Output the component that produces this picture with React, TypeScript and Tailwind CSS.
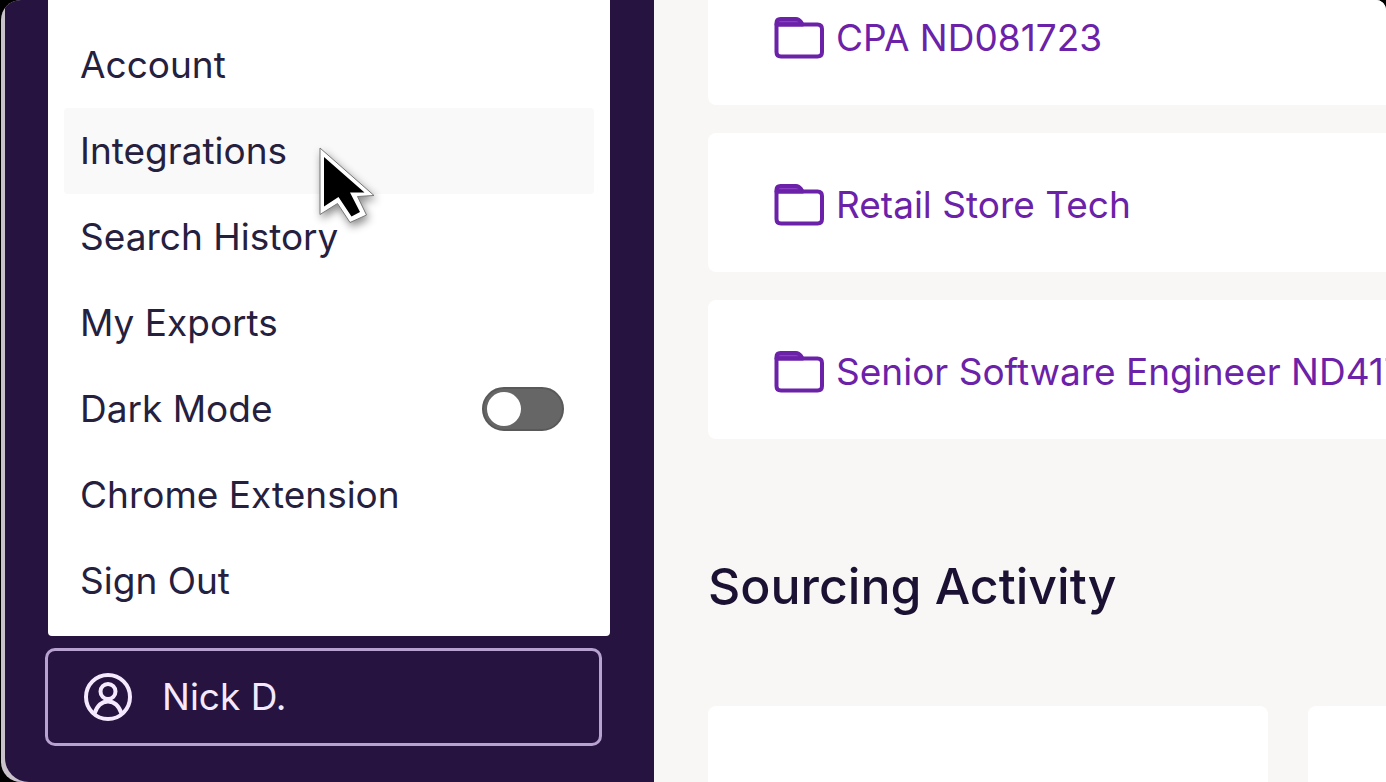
import { useState } from "react";

const menuItems = ["Account", "Integrations", "Search History", "My Exports", "Dark Mode", "Chrome Extension", "Sign Out"]

const projects = ["CPA ND081723", "Retail Store Tech", "Senior Software Engineer ND417"]

const FolderIcon = () => (
  <svg className="w-[50px] h-[42px] shrink-0" viewBox="0 0 50 42" fill="none" stroke="#6b21a8" strokeWidth="4" strokeLinejoin="round" aria-hidden="true">
    <path d="M2.5 7.500V6C2.500 3.500 4 2 6.500 2H22C24.500 2 25.500 3 27 5L28.500 7.500Z" fill="#8b3fc4" />
    <path d="M2.500 7.500H43.500C46.500 7.500 48 9 48 12V35C48 38 46.500 39.500 43.500 39.500H7C4 39.500 2.500 38 2.500 35Z" />
  </svg>
)

const UserIcon = () => (
  <svg className="w-12 h-12 shrink-0" viewBox="0 0 48 48" fill="none" stroke="currentColor" strokeWidth="4" aria-hidden="true">
    <circle cx="24" cy="24" r="22" />
    <circle cx="24" cy="18.500" r="7.500" />
    <path d="M10.500 40.500C13 33 17.500 28.500 24 28.500S35 33 37.500 40.500" />
  </svg>
)

const Cursor = () => (
  <svg className="absolute left-[254px] top-[39px] w-[62px] h-[84px] z-10 pointer-events-none drop-shadow-[2px_4px_4px_rgba(0,0,0,0.45)]" viewBox="0 0 62 84" aria-hidden="true">
    <path d="M2 1L56 48.500L39.500 49.500L48.500 68L32 75.500L19.500 56.500L2 67.500Z" fill="#fff" stroke="#777" strokeWidth="1" />
    <path d="M6 10L46.500 45.500L32 45.500L42 65L33.500 69.500L20.500 50L6 59.500Z" fill="#000" />
  </svg>
)

const MenuItem = ({ label }: { label: string }) => {
  const [checked, setChecked] = useState(false)

  if (label === "Dark Mode") {
    return (
      <li>
        <label className="h-[86px] px-4 flex items-center justify-between cursor-pointer">
          <span>{label}</span>
          <span className="relative mr-[14px] w-[82px] h-11">
            <input
              type="checkbox"
              role="switch"
              className="w-full h-full appearance-none rounded-full bg-[#666666] border-2 border-[#595959]"
              checked={checked}
              onChange={(e) => setChecked(e.target.checked)}
            />
            <span className={`${checked ? "right-[5px]" : "left-[5px]"} absolute top-[5px] w-[34px] h-[34px] rounded-full bg-white pointer-events-none`}></span>
          </span>
        </label>
      </li>
    )
  }

  return (
    <li className="relative">
      <a href="#" className={`${label === "Integrations" ? "bg-[#f9f9fa]" : ""} h-[86px] px-4 flex items-center rounded-[4px]`}>{label}</a>
      {label === "Integrations" && <Cursor />}
    </li>
  )
}

const Sidebar = () => (
  <aside className="w-[649px] shrink-0 pl-10 pr-[44px] pb-9 flex flex-col gap-3 rounded-bl-[24px] rounded-tl-[6px] bg-[#27133f]">
    <nav className="ml-[3px] px-4 pb-3 flex-1 min-h-0 flex flex-col justify-end rounded-b-[4px] bg-white text-[37px] text-[#26203f]">
      <ul>
        {menuItems.map((label) => (
          <MenuItem key={label} label={label} />
        ))}
      </ul>
    </nav>
    <button className="mr-2 h-[98px] px-9 shrink-0 flex items-center gap-[30px] rounded-[10px] border-[3px] border-[#b8a2d2] text-[37px] text-[#f4e9ff]">
      <UserIcon />
      <span>Nick D.</span>
    </button>
  </aside>
)

const App = () => {
  return (
    <div className="h-screen overflow-hidden bg-black font-['Inter',sans-serif]">
      <div className="h-full pl-px">
        <div className="h-full pl-1 flex overflow-hidden rounded-l-[20px] rounded-tr-[10px] bg-[#c9c2cb]">
          <Sidebar />
          <main className="flex-1 min-w-0 pl-[54px] overflow-hidden bg-[#f8f7f5]">
            <ul className="-mt-[34px] flex flex-col gap-7">
              {projects.map((name) => (
                <li key={name} className="h-[139px] pt-1 pl-[66px] flex items-center rounded-l-[8px] bg-white overflow-hidden">
                  <a href="#" className="flex items-center gap-3 whitespace-nowrap text-[37px] text-[#6b21a8]">
                    <FolderIcon />
                    <span>{name}</span>
                  </a>
                </li>
              ))}
            </ul>
            <h2 className="mt-[115px] text-[50px] leading-[64px] font-medium text-[#1b1233]">Sourcing Activity</h2>
            <div className="mt-[88px] flex gap-10">
              <div className="h-[200px] w-[560px] shrink-0 rounded-[8px] bg-white"></div>
              <div className="h-[200px] w-[560px] shrink-0 rounded-[8px] bg-white"></div>
            </div>
          </main>
        </div>
      </div>
    </div>
  )
}

export default App
